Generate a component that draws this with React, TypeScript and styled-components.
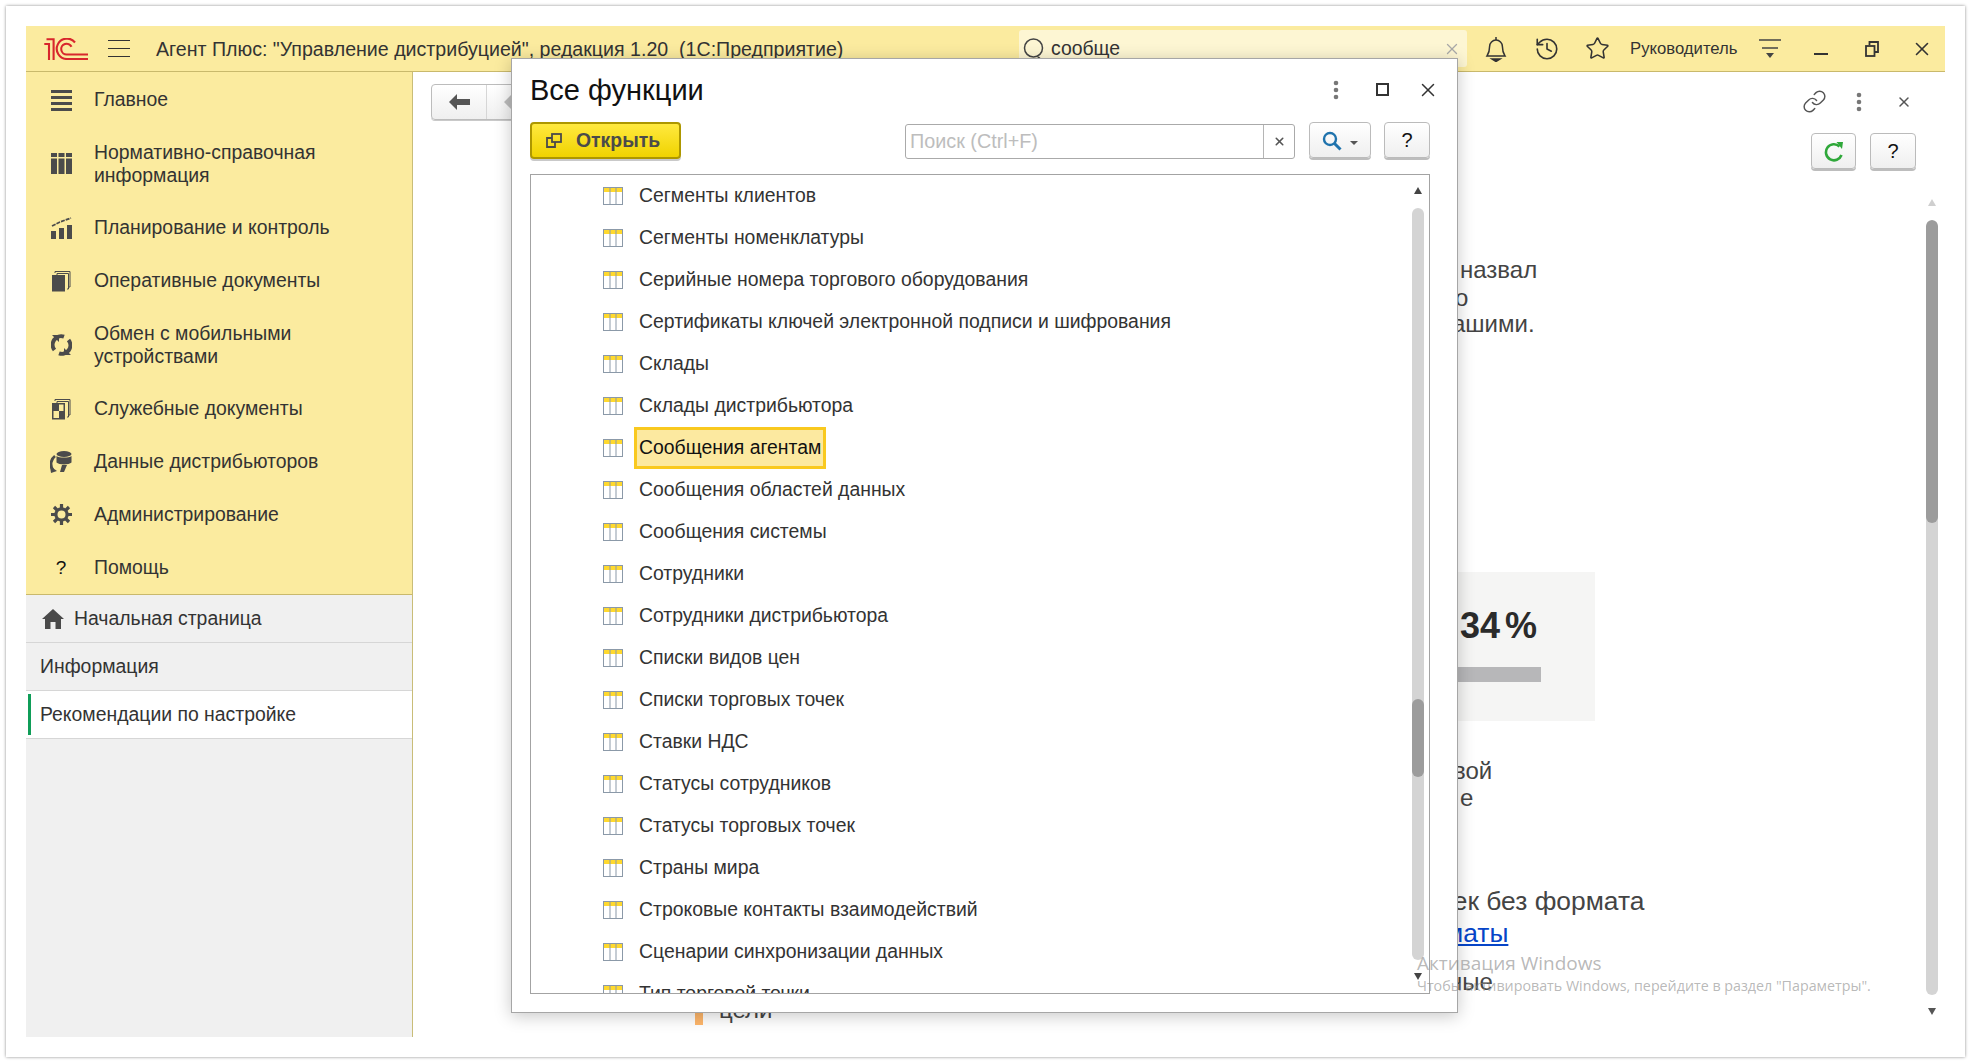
import React from "react";
import styled, { createGlobalStyle } from "styled-components";
import { History, Link, Star, X } from "lucide-react";

const Global = createGlobalStyle`
  html, body { margin: 0; padding: 0; background: #fff; overflow: hidden; }
  body { font-family: "Liberation Sans", Arial, sans-serif; color: #333; }
  * { box-sizing: border-box; }
`;

const Page = styled.div`
  width: 1971px;
  height: 1064px;
  padding: 6px 6px 7px 6px;
`;
const Card = styled.div`
  height: 100%;
  padding: 20px;
  background: #fff;
  box-shadow: 0 0 3px rgba(0, 0, 0, 0.45);
`;
const Frame = styled.div`
  position: relative;
  height: 100%;
  display: flex;
  flex-direction: column;
  overflow: hidden;
`;
const TopBar = styled.header`
  flex: none;
  height: 46px;
  display: flex;
  align-items: center;
  padding-left: 18px;
  background: #fbeb9f;
  border-bottom: 1px solid #c9b96c;
`;
const Burger = styled.div`
  flex: none;
  width: 22px;
  height: 17px;
  margin-left: 20px;
  border-top: 1.5px solid #333;
  border-bottom: 1.5px solid #333;
  display: flex;
  align-items: center;
  &::before {
    content: "";
    width: 100%;
    height: 1.5px;
    background: #333;
  }
`;
const WindowTitle = styled.div`
  flex: none;
  width: 690px;
  margin-left: 26px;
  padding-top: 2px;
  font-size: 19.6px;
  color: #333;
  white-space: pre;
`;
const GlobalSearch = styled.div`
  flex: none;
  width: 448px;
  height: 37px;
  margin-left: 173px;
  align-self: flex-start;
  margin-top: 4px;
  padding-left: 4px;
  display: flex;
  align-items: center;
  gap: 6px;
  background: #fdf6d3;
  border-radius: 3px;
  font-size: 19.4px;
  color: #333;
`;
const GlobalSearchClear = styled.span`
  margin-left: auto;
  margin-right: 6px;
  display: flex;
  color: #a9a9a9;
`;
const TopCell = styled.div<{ $w?: number; $ml?: number }>`
  flex: none;
  width: ${(p) => p.$w ?? 50}px;
  margin-left: ${(p) => p.$ml ?? 0}px;
  display: flex;
  align-items: center;
  justify-content: center;
  color: #333;
`;
const RoleName = styled.div`
  flex: none;
  width: 108px;
  margin-left: 8px;
  font-size: 16.7px;
  color: #333;
  white-space: nowrap;
`;
const Body = styled.div`
  flex: 1;
  min-height: 0;
  display: flex;
`;
const Sidebar = styled.aside`
  flex: none;
  width: 387px;
  display: flex;
  flex-direction: column;
  background: #f0f0f0;
  border-right: 1px solid #c9bd78;
`;
const NavList = styled.nav`
  flex: none;
  height: 523px;
  padding-top: 1px;
  background: #fbeb9f;
  border-bottom: 1px solid #c9b96c;
`;
const NavRow = styled.div<{ $tall?: boolean }>`
  height: ${(p) => (p.$tall ? 75 : 53)}px;
  display: flex;
  align-items: center;
  padding-left: 24px;
  gap: 22px;
  font-size: 19.4px;
  line-height: 23px;
  color: #333;
`;
const NavIcon = styled.span`
  flex: none;
  width: 22px;
  height: 24px;
  display: flex;
  align-items: center;
  justify-content: center;
  color: #4b4b4b;
`;
const NavQuestion = styled(NavIcon)`
  color: #111;
  font-size: 19px;
`;
const SectionRow = styled.div<{ $active?: boolean }>`
  position: relative;
  height: 48px;
  display: flex;
  align-items: center;
  gap: 10px;
  padding-left: 14px;
  font-size: 19.4px;
  color: #333;
  background: ${(p) => (p.$active ? "#fff" : "transparent")};
  border-bottom: 1px solid #d6d6d6;
  &::before {
    content: "";
    display: ${(p) => (p.$active ? "block" : "none")};
    position: absolute;
    left: 2px;
    top: 3px;
    bottom: 3px;
    width: 3px;
    background: #0f9d58;
  }
`;
const HomeSection = styled(SectionRow)`
  padding-left: 16px;
`;
const Main = styled.main`
  flex: 1;
  min-width: 0;
  display: flex;
  flex-direction: column;
  background: #fff;
`;
const MainHead = styled.div`
  flex: none;
  height: 61px;
  padding: 12px 21px 0 18px;
  display: flex;
  justify-content: space-between;
`;
const NavButtons = styled.div`
  width: 140px;
  height: 36px;
  display: flex;
  background: linear-gradient(#ffffff, #efefef);
  border: 1px solid #bcbcbc;
  border-radius: 4px;
  box-shadow: 0 1px 0 #c9c9c9;
`;
const NavButton = styled.span`
  width: 55px;
  display: flex;
  align-items: center;
  justify-content: center;
  border-right: 1px solid #d6d6d6;
`;
const HeadTools = styled.div`
  display: flex;
  gap: 5px;
`;
const HeadTool = styled.span`
  width: 40px;
  height: 35px;
  display: flex;
  align-items: center;
  justify-content: center;
  color: #555;
`;
const ActionRow = styled.div`
  flex: none;
  height: 39px;
  padding-right: 29px;
  display: flex;
  justify-content: flex-end;
  gap: 14px;
`;
const ToolButton = styled.button<{ $w: number }>`
  flex: none;
  width: ${(p) => p.$w}px;
  height: 36px;
  padding: 1px 0 0;
  display: flex;
  align-items: center;
  justify-content: center;
  gap: 8px;
  background: linear-gradient(#ffffff, #efefef);
  border: 1px solid #bbb;
  border-radius: 4px;
  box-shadow: 0 2px 0 #bdbdbd;
  font-family: inherit;
  font-size: 20px;
  color: #111;
`;
const ContentRow = styled.div`
  flex: 1;
  min-height: 0;
  margin-top: 24px;
  display: flex;
`;
const Content = styled.div`
  flex: 1;
  min-width: 0;
  padding-left: 18px;
  display: flex;
  flex-direction: column;
  color: #444;
  white-space: nowrap;
`;
const TextLine = styled.div<{ $indent: number; $mt?: number; $size?: number; $lh?: number }>`
  margin-left: ${(p) => p.$indent}px;
  margin-top: ${(p) => p.$mt ?? 0}px;
  font-size: ${(p) => p.$size ?? 24}px;
  line-height: ${(p) => p.$lh ?? 27.5}px;
`;
const DocLink = styled.a`
  color: #0645c8;
  text-decoration: underline;
`;
const StatBox = styled.div`
  width: 595px;
  height: 149px;
  margin-left: 569px;
  margin-top: 234px;
  padding: 34px 0 0 460px;
  background: #f5f5f4;
`;
const StatValue = styled.div`
  font-size: 36px;
  line-height: 40px;
  font-weight: 700;
  color: #2b2b2b;
  word-spacing: -5px;
`;
const StatBar = styled.div`
  width: 176px;
  height: 15px;
  margin: 21px 0 0 -95px;
  background: #b7b7b9;
`;
const GoalRow = styled.div`
  display: flex;
  gap: 16px;
  margin: 4px 0 0 264px;
  height: 26px;
`;
const GoalMark = styled.span`
  flex: none;
  width: 8px;
  height: 26px;
  background: #ffb76b;
`;
const GoalText = styled.span`
  margin-top: -3px;
  font-size: 24px;
  line-height: 27px;
`;
const ScrollCol = styled.div<{ $mr: number; $pb: number }>`
  flex: none;
  width: 12px;
  margin-right: ${(p) => p.$mr}px;
  padding-bottom: ${(p) => p.$pb}px;
  display: flex;
  flex-direction: column;
  align-items: center;
`;
const Arrow = styled.span<{ $down?: boolean; $color: string; $mt: number }>`
  flex: none;
  width: 0;
  height: 0;
  margin-top: ${(p) => p.$mt}px;
  border-left: 4px solid transparent;
  border-right: 4px solid transparent;
  ${(p) => (p.$down ? "border-top" : "border-bottom")}: 7px solid ${(p) => p.$color};
`;
const Track = styled.div<{ $mt: number }>`
  flex: 1;
  width: 12px;
  min-height: 0;
  margin-top: ${(p) => p.$mt}px;
  background: #d4d4d4;
  border-radius: 6px;
  overflow: hidden;
`;
const Thumb = styled.div<{ $top: number; $h: number }>`
  height: ${(p) => p.$h}px;
  margin-top: ${(p) => p.$top}px;
  background: #9c9c9c;
  border-radius: 6px;
`;
const Dialog = styled.section`
  position: absolute;
  z-index: 2;
  left: 485px;
  top: 32px;
  width: 947px;
  height: 955px;
  display: flex;
  flex-direction: column;
  padding: 0 27px 18px 18px;
  background: #fff;
  border: 1px solid #a6a6a6;
  box-shadow: 0 3px 16px rgba(0, 0, 0, 0.22);
`;
const DialogHead = styled.div`
  flex: none;
  height: 63px;
  margin-right: -21px;
  display: flex;
  align-items: center;
`;
const DialogTitle = styled.h2`
  margin: 0;
  flex: 1;
  font-size: 29px;
  font-weight: 400;
  color: #111;
`;
const DialogTool = styled.span<{ $w: number }>`
  width: ${(p) => p.$w}px;
  margin-bottom: 2px;
  display: flex;
  justify-content: center;
  align-items: center;
  color: #333;
`;
const DialogToolbar = styled.div`
  flex: none;
  height: 52px;
  display: flex;
  align-items: flex-start;
`;
const OpenButton = styled.button`
  flex: none;
  width: 151px;
  height: 37px;
  padding: 0 0 0 14px;
  display: flex;
  align-items: center;
  gap: 14px;
  background: linear-gradient(#ffe93f, #f0d300);
  border: 2px solid #ad9700;
  border-radius: 4px;
  box-shadow: 0 2px 0 #c9c9c9;
  font-family: inherit;
  font-size: 19.4px;
  font-weight: 700;
  color: #4a4a4a;
`;
const SearchField = styled.div`
  flex: none;
  width: 390px;
  height: 35px;
  margin: 2px 14px 0 224px;
  display: flex;
  background: #fff;
  border: 1px solid #aaa;
  border-radius: 3px;
`;
const SearchPlaceholder = styled.div`
  flex: 1;
  padding-left: 4px;
  line-height: 33px;
  font-size: 19.8px;
  color: #bdbdbd;
`;
const SearchClear = styled.span`
  flex: none;
  width: 31px;
  display: flex;
  align-items: center;
  justify-content: center;
  border-left: 1px solid #b5b5b5;
  color: #555;
`;
const DialogButtons = styled.div`
  display: flex;
  gap: 13px;
`;
const Caret = styled.span`
  width: 0;
  height: 0;
  border-left: 4px solid transparent;
  border-right: 4px solid transparent;
  border-top: 4px solid #555;
  margin-top: 4px;
`;
const List = styled.div`
  flex: 1;
  min-height: 0;
  display: flex;
  border: 1px solid #a3a3a3;
  overflow: hidden;
`;
const Rows = styled.div`
  flex: 1;
  min-width: 0;
  overflow: hidden;
`;
const Row = styled.div`
  height: 42px;
  display: flex;
  align-items: center;
  padding-left: 72px;
  gap: 11px;
  font-size: 19.4px;
  color: #333;
`;
const RowText = styled.span<{ $selected?: boolean }>`
  height: 42px;
  display: flex;
  align-items: center;
  padding: 0 2px 1px;
  border: 3px solid ${(p) => (p.$selected ? "#f9c91f" : "transparent")};
  background: ${(p) => (p.$selected ? "#fce9a0" : "transparent")};
  color: ${(p) => (p.$selected ? "#111" : "#333")};
`;
const Watermark = styled.div`
  position: absolute;
  z-index: 3;
  left: 1391px;
  top: 924px;
  font-family: "Open Sans", sans-serif;
  color: rgba(140, 140, 140, 0.62);
  pointer-events: none;
  white-space: nowrap;
`;
const WatermarkTitle = styled.div`
  font-size: 19px;
  line-height: 26px;
`;
const WatermarkText = styled.div`
  font-size: 14.28px;
  line-height: 20px;
`;

const Logo = () => (
  <svg width="44" height="22" viewBox="0 0 44 22" fill="none" stroke="#d8262c" strokeWidth="2.1" style={{ flex: "none" }}>
    <path d="M0.3 6 H5 V22" />
    <path d="M2.5 1.2 H9.6 V22" />
    <path d="M31 4.5 A10.2 10.2 0 1 0 23 21 H44" />
    <path d="M27.5 8.8 A5.4 5.4 0 1 0 23 16.5 H44" />
  </svg>
);
const Bell = () => (
  <svg width="22" height="26" viewBox="0 0 22 26" fill="none" stroke="#333" strokeWidth="1.5">
    <path d="M11 1v3" />
    <path d="M2 20c2-3 2.6-6 2.6-9.5a6.4 6.4 0 0 1 12.8 0C17.4 14 18 17 20 20z" />
    <path d="M7 23h8l-4 2.5z" fill="#333" />
  </svg>
);
const FilterLines = () => (
  <svg width="22" height="19" viewBox="0 0 22 19" fill="none" stroke="#444" strokeWidth="1.6">
    <path d="M0 1h22M3 9h16" />
    <path d="M7 14h8l-4 5z" fill="#444" stroke="none" />
  </svg>
);
const Minimize = () => (
  <svg width="14" height="16" viewBox="0 0 14 16">
    <rect x="0" y="12" width="14" height="2" fill="#333" />
  </svg>
);
const Restore = () => (
  <svg width="14" height="16" viewBox="0 0 14 16" fill="none" stroke="#333" strokeWidth="1.8">
    <rect x="1" y="5" width="8.5" height="10" fill="#fbeb9f" />
    <path d="M4.5 4V1h8.5v10h-3" />
  </svg>
);
const Cross = ({ size = 16, w = 1.5 }: { size?: number; w?: number }) => (
  <X size={size} strokeWidth={w} absoluteStrokeWidth />
);
const Magnifier = () => (
  <svg width="22" height="26" viewBox="0 0 22 26" fill="none" stroke="#444" strokeWidth="1.5">
    <circle cx="10.5" cy="12" r="9" />
    <path d="M15 21l4 4" strokeWidth="2" />
  </svg>
);
const Dots = () => (
  <svg width="6" height="20" viewBox="0 0 6 20" fill="#777">
    <circle cx="3" cy="3" r="2.3" />
    <circle cx="3" cy="10" r="2.3" />
    <circle cx="3" cy="17" r="2.3" />
  </svg>
);
const BackArrow = ({ color }: { color: string }) => (
  <svg width="21" height="16" viewBox="0 0 21 16" fill={color}>
    <path d="M0 8 L8 0 V5 H21 V11 H8 V16 Z" />
  </svg>
);
const Refresh = () => (
  <svg width="20" height="22" viewBox="0 0 20 22" fill="none">
    <path d="M15.5 5.5 A8 8 0 1 0 17.5 14" stroke="#2fa83a" strokeWidth="2.6" />
    <path d="M12.5 1 L19 1 L18 8 Z" fill="#2fa83a" />
  </svg>
);
const TableIcon = () => (
  <svg width="20" height="18" viewBox="0 0 20 18" style={{ flex: "none" }}>
    <rect x="0.5" y="0.5" width="19" height="17" fill="#fff" stroke="#8b99a8" />
    <rect x="1" y="1" width="18" height="4" fill="#ffd92e" />
    <path d="M7 1V17M13 1V17" stroke="#8b99a8" />
  </svg>
);
const OpenIcon = () => (
  <svg width="16" height="15" viewBox="0 0 16 15" fill="none" stroke="#4a4a4a" strokeWidth="1.8" style={{ flex: "none" }}>
    <rect x="6" y="1" width="9" height="8" />
    <path d="M6 5H1v9h8v-5" />
  </svg>
);
const BlueSearch = () => (
  <svg width="20" height="20" viewBox="0 0 20 20" fill="none" stroke="#1f73ad" strokeWidth="2.4">
    <circle cx="8" cy="8" r="6" />
    <path d="M12.5 12.5L18.5 18.5" strokeWidth="3" />
  </svg>
);

const MainIcon = () => (
  <svg width="21" height="22" viewBox="0 0 21 22" fill="#4b4b4b">
    <rect y="1" width="21" height="3" />
    <rect y="7" width="21" height="3" />
    <rect y="13" width="21" height="3" />
    <rect y="19" width="21" height="3" />
  </svg>
);
const CatalogIcon = () => (
  <svg width="21" height="21" viewBox="0 0 21 21" fill="#4b4b4b">
    <rect x="0" y="0" width="6" height="4" />
    <rect x="7.5" y="0" width="6" height="4" />
    <rect x="15" y="0" width="6" height="4" />
    <rect x="0" y="5.5" width="6" height="15.5" />
    <rect x="7.5" y="5.5" width="6" height="15.5" />
    <rect x="15" y="5.5" width="6" height="15.5" />
  </svg>
);
const PlanIcon = () => (
  <svg width="21" height="22" viewBox="0 0 21 22" fill="#4b4b4b">
    <rect x="0" y="14" width="5" height="8" />
    <rect x="8" y="11" width="5" height="11" />
    <rect x="16" y="8" width="5" height="14" />
    <path d="M1 9 L9 5 L20 1" stroke="#4b4b4b" strokeWidth="1.8" strokeDasharray="4 1" fill="none" />
  </svg>
);
const DocsIcon = ({ quadrants }: { quadrants?: boolean }) => (
  <svg width="19" height="22" viewBox="0 0 19 22" fill="none">
    <path d="M3 3V1.5H18V17H16.5" stroke="#4b4b4b" strokeWidth="1" />
    <path d="M5 5V3.5H16.5V19H15" stroke="#4b4b4b" strokeWidth="1" />
    <rect x="0" y="5" width="13" height="16.5" fill="#4b4b4b" />
    {quadrants && <rect x="7" y="6.5" width="4.5" height="6.5" fill="#fbeb9f" />}
    {quadrants && <rect x="1.5" y="13" width="5.5" height="7" fill="#fbeb9f" />}
  </svg>
);
const SyncIcon = () => (
  <svg width="21" height="22" viewBox="0 0 21 22" fill="none">
    <path d="M3.5 16 A8.5 8.5 0 0 1 13 2.7" stroke="#4b4b4b" strokeWidth="4" />
    <path d="M17.5 6 A8.5 8.5 0 0 1 8 19.3" stroke="#4b4b4b" strokeWidth="4" />
    <path d="M1 1 H8 V8 Z M20 21 H13 V14 Z" fill="#4b4b4b" />
  </svg>
);
const DataIcon = () => (
  <svg width="22" height="23" viewBox="0 0 22 23" fill="none">
    <ellipse cx="14" cy="4" rx="7.5" ry="3" fill="#4b4b4b" />
    <path d="M6.5 6 C9 8 19 8 21.5 6 V12.5 C19 15 9 15 6.5 12.5Z" fill="#4b4b4b" />
    <path d="M5 6 A10 10 0 0 0 3 20" stroke="#4b4b4b" strokeWidth="2.8" />
    <path d="M0 16 L7 21 L1 23 Z" fill="#4b4b4b" />
    <path d="M17 15 L14 22 L10 22 L12 15 Z" fill="#4b4b4b" />
  </svg>
);
const GearIcon = () => (
  <svg width="21" height="21" viewBox="0 0 21 21" fill="none" stroke="#4b4b4b">
    <circle cx="10.5" cy="10.5" r="5.6" strokeWidth="3.2" />
    <path
      d="M10.5 0v4M10.5 17v4M0 10.5h4M17 10.5h4M3 3l3 3M15 15l3 3M18 3l-3 3M6 15l-3 3"
      strokeWidth="3.2"
    />
  </svg>
);
const HomeIcon = () => (
  <svg width="22" height="20" viewBox="0 0 22 20" fill="#4a4a4a" style={{ flex: "none" }}>
    <path d="M11 0 L22 10 H19 V20 H13.5 V13 H8.5 V20 H3 V10 H0 Z" />
  </svg>
);

const NAV: { text: React.ReactNode; icon: React.ReactNode; tall?: boolean }[] = [
  { text: "Главное", icon: <MainIcon /> },
  { text: <>Нормативно-справочная<br />информация</>, icon: <CatalogIcon />, tall: true },
  { text: "Планирование и контроль", icon: <PlanIcon /> },
  { text: "Оперативные документы", icon: <DocsIcon /> },
  { text: <>Обмен с мобильными<br />устройствами</>, icon: <SyncIcon />, tall: true },
  { text: "Служебные документы", icon: <DocsIcon quadrants /> },
  { text: "Данные дистрибьюторов", icon: <DataIcon /> },
  { text: "Администрирование", icon: <GearIcon /> },
];

const ROWS = [
  "Сегменты клиентов",
  "Сегменты номенклатуры",
  "Серийные номера торгового оборудования",
  "Сертификаты ключей электронной подписи и шифрования",
  "Склады",
  "Склады дистрибьютора",
  "Сообщения агентам",
  "Сообщения областей данных",
  "Сообщения системы",
  "Сотрудники",
  "Сотрудники дистрибьютора",
  "Списки видов цен",
  "Списки торговых точек",
  "Ставки НДС",
  "Статусы сотрудников",
  "Статусы торговых точек",
  "Страны мира",
  "Строковые контакты взаимодействий",
  "Сценарии синхронизации данных",
  "Тип торговой точки",
];

export default function App() {
  return (
    <Page>
      <Global />
      <Card>
        <Frame>
          <TopBar>
            <Logo />
            <Burger />
            <WindowTitle>Агент Плюс: "Управление дистрибуцией", редакция 1.20  (1С:Предприятие)</WindowTitle>
            <GlobalSearch>
              <Magnifier />
              сообще
              <GlobalSearchClear><Cross size={18} w={1.3} /></GlobalSearchClear>
            </GlobalSearch>
            <TopCell $ml={4}><Bell /></TopCell>
            <TopCell $ml={1}><History size={26} strokeWidth={1.5} /></TopCell>
            <TopCell><Star size={25} strokeWidth={1.5} /></TopCell>
            <RoleName>Руководитель</RoleName>
            <TopCell $w={44} $ml={10}><FilterLines /></TopCell>
            <TopCell $ml={4}><Minimize /></TopCell>
            <TopCell $ml={1}><Restore /></TopCell>
            <TopCell $w={48} $ml={1}><Cross size={22} w={1.6} /></TopCell>
          </TopBar>
          <Body>
            <Sidebar>
              <NavList>
                {NAV.map((n, i) => (
                  <NavRow key={i} $tall={n.tall}>
                    <NavIcon>{n.icon}</NavIcon>
                    <div>{n.text}</div>
                  </NavRow>
                ))}
                <NavRow>
                  <NavQuestion>?</NavQuestion>
                  <div>Помощь</div>
                </NavRow>
              </NavList>
              <HomeSection><HomeIcon />Начальная страница</HomeSection>
              <SectionRow>Информация</SectionRow>
              <SectionRow $active>Рекомендации по настройке</SectionRow>
            </Sidebar>
            <Main>
              <MainHead>
                <NavButtons>
                  <NavButton><BackArrow color="#555" /></NavButton>
                  <NavButton><BackArrow color="#bbb" /></NavButton>
                </NavButtons>
                <HeadTools>
                  <HeadTool><Link size={25} strokeWidth={1.4} /></HeadTool>
                  <HeadTool><Dots /></HeadTool>
                  <HeadTool><Cross size={16} w={1.5} /></HeadTool>
                </HeadTools>
              </MainHead>
              <ActionRow>
                <ToolButton $w={45}><Refresh /></ToolButton>
                <ToolButton $w={46}>?</ToolButton>
              </ActionRow>
              <ContentRow>
                <Content>
                  <TextLine $indent={1029} $mt={60}>назвал</TextLine>
                  <TextLine $indent={1024}>о</TextLine>
                  <TextLine $indent={1021} $mt={-1}>ашими.</TextLine>
                  <StatBox>
                    <StatValue>34 %</StatValue>
                    <StatBar />
                  </StatBox>
                  <TextLine $indent={1022} $mt={36}>вой</TextLine>
                  <TextLine $indent={1029}>е</TextLine>
                  <TextLine $indent={1008} $mt={73} $size={26.4} $lh={32}>чек без формата</TextLine>
                  <TextLine $indent={963} $size={26.4} $lh={32}><DocLink>форматы</DocLink></TextLine>
                  <TextLine $indent={1018} $mt={19}>ные</TextLine>
                  <GoalRow>
                    <GoalMark />
                    <GoalText>цели</GoalText>
                  </GoalRow>
                </Content>
                <ScrollCol $mr={7} $pb={22}>
                  <Arrow $color="#cfcfcf" $mt={3} />
                  <Track $mt={14}><Thumb $top={0} $h={303} /></Track>
                  <Arrow $down $color="#555" $mt={13} />
                </ScrollCol>
              </ContentRow>
            </Main>
          </Body>
          <Dialog>
            <DialogHead>
              <DialogTitle>Все функции</DialogTitle>
              <DialogTool $w={46}><Dots /></DialogTool>
              <DialogTool $w={46}>
                <svg width="13" height="13" viewBox="0 0 13 13" fill="none" stroke="#333" strokeWidth="2"><rect x="1" y="1" width="11" height="11" /></svg>
              </DialogTool>
              <DialogTool $w={46}><Cross size={22} w={1.5} /></DialogTool>
            </DialogHead>
            <DialogToolbar>
              <OpenButton><OpenIcon />Открыть</OpenButton>
              <SearchField>
                <SearchPlaceholder>Поиск (Ctrl+F)</SearchPlaceholder>
                <SearchClear><Cross size={13} w={1.6} /></SearchClear>
              </SearchField>
              <DialogButtons>
                <ToolButton $w={62}><BlueSearch /><Caret /></ToolButton>
                <ToolButton $w={46}>?</ToolButton>
              </DialogButtons>
            </DialogToolbar>
            <List>
              <Rows>
                {ROWS.map((r, i) => (
                  <Row key={r}>
                    <TableIcon />
                    <RowText $selected={i === 6}>{r}</RowText>
                  </Row>
                ))}
              </Rows>
              <ScrollCol $mr={5} $pb={13}>
                <Arrow $color="#444" $mt={12} />
                <Track $mt={14}><Thumb $top={491} $h={78} /></Track>
                <Arrow $down $color="#444" $mt={13} />
              </ScrollCol>
            </List>
          </Dialog>
          <Watermark>
            <WatermarkTitle>Активация Windows</WatermarkTitle>
            <WatermarkText>Чтобы активировать Windows, перейдите в раздел "Параметры".</WatermarkText>
          </Watermark>
        </Frame>
      </Card>
    </Page>
  );
}
